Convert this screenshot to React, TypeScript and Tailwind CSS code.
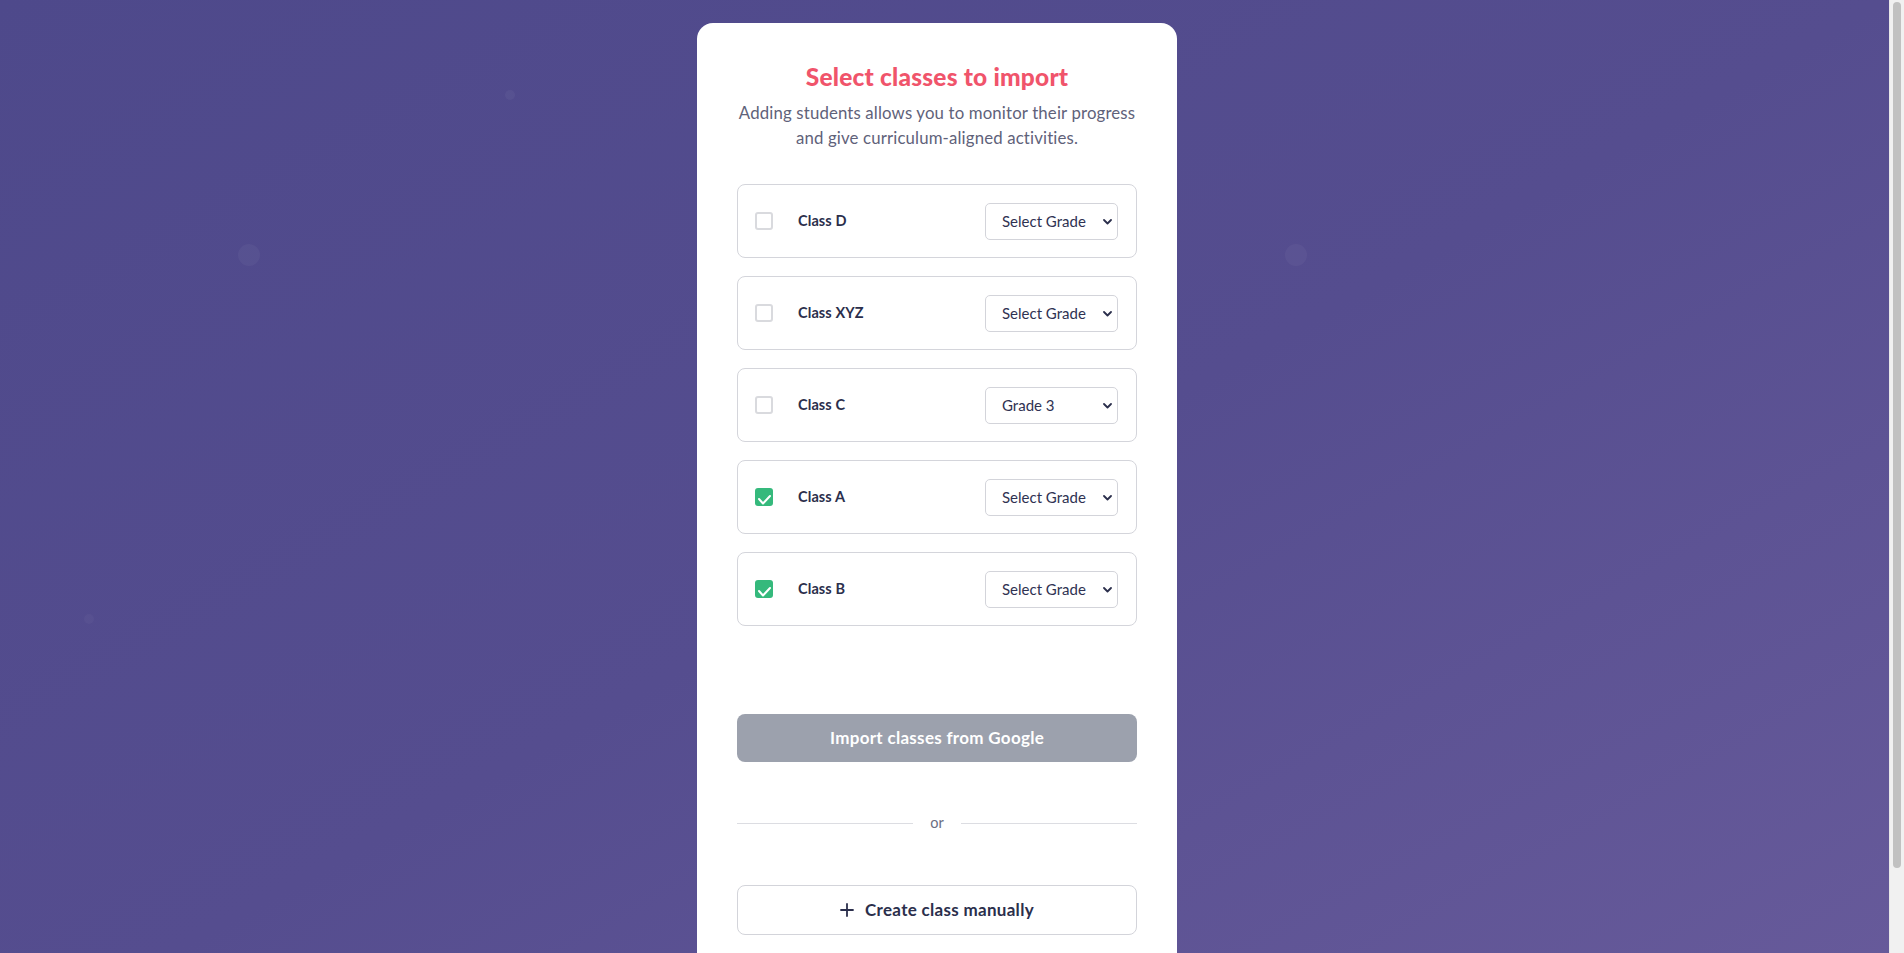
import React, { useState } from "react";

type Row = { name: string; grade: string; checked: boolean };

const initial: Row[] = [
  { name: "Class D", grade: "Select Grade", checked: false },
  { name: "Class XYZ", grade: "Select Grade", checked: false },
  { name: "Class C", grade: "Grade 3", checked: false },
  { name: "Class A", grade: "Select Grade", checked: true },
  { name: "Class B", grade: "Select Grade", checked: true },
];

const grades = ["Select Grade", "Grade 1", "Grade 2", "Grade 3", "Grade 4", "Grade 5"];

function Checkbox({ checked, onClick }: { checked: boolean; onClick: () => void }) {
  return (
    <button
      type="button"
      onClick={onClick}
      className={
        checked
          ? "w-[18px] h-[18px] rounded-[3px] bg-[#35b97c] flex items-end justify-center shrink-0 overflow-hidden"
          : "w-[18px] h-[18px] rounded-[3px] border-2 border-[#d9dade] bg-white shrink-0"
      }
    >
      {checked && (
        <svg width="15" height="13" viewBox="0 0 15 13" fill="none">
          <path d="M2 6 L6 10.5 L13 3" stroke="white" strokeWidth="2" strokeLinecap="round" strokeLinejoin="round" />
        </svg>
      )}
    </button>
  );
}

export default function App() {
  const [rows, setRows] = useState<Row[]>(initial);
  const toggle = (i: number) =>
    setRows((r) => r.map((x, j) => (j === i ? { ...x, checked: !x.checked } : x)));
  const setGrade = (i: number, g: string) =>
    setRows((r) => r.map((x, j) => (j === i ? { ...x, grade: g } : x)));

  return (
    <div className="h-screen w-full overflow-hidden flex">
      <div
        className="relative flex-1 h-[1050px] overflow-hidden bg-gradient-to-br from-[#4e498b] via-[#554d8f] to-[#685b9b] flex justify-center pr-[15px] pt-[23px] pb-[40px]"
        style={{ fontFamily: "Lato, 'Noto Sans', sans-serif" }}
      >
        <div className="absolute left-[238px] top-[244px] w-[22px] h-[22px] rounded-full bg-white/[0.04]" />
        <div className="absolute left-[1285px] top-[244px] w-[22px] h-[22px] rounded-full bg-white/[0.04]" />
        <div className="absolute left-[505px] top-[90px] w-[10px] h-[10px] rounded-full bg-white/[0.04]" />
        <div className="absolute left-[84px] top-[614px] w-[10px] h-[10px] rounded-full bg-white/[0.03]" />

        <div className="relative w-[480px] bg-white rounded-[16px] px-[40px] pt-[40px] pb-[60px] flex flex-col">
          <h1 className="text-center text-[24.5px] leading-[28px] font-black text-[#f0546b] tracking-[0.2px]">
            Select classes to import
          </h1>
          <p className="mt-[9px] text-center text-[16.8px] leading-[25px] text-[#5f627a] tracking-[0.15px]">
            Adding students allows you to monitor their progress and give curriculum-aligned activities.
          </p>

          <div className="mt-[34px] flex flex-col gap-[18px]">
            {rows.map((r, i) => (
              <div
                key={r.name}
                className="h-[74px] border border-[#d4d5db] rounded-[8px] pl-[17px] pr-[18px] flex items-center"
              >
                <Checkbox checked={r.checked} onClick={() => toggle(i)} />
                <span className="ml-[25px] flex-1 text-[14.5px] font-bold text-[#2b2f4c] tracking-[0.1px]">{r.name}</span>
                <div className="relative w-[133px] h-[37px]">
                  <select
                    value={r.grade}
                    onChange={(e) => setGrade(i, e.target.value)}
                    className="appearance-none w-full h-full border border-[#d3d4da] rounded-[5px] bg-white pl-[16px] pr-[24px] text-[15px] text-[#2f3252] outline-none"
                    style={{ fontFamily: "Lato, 'Noto Sans', sans-serif" }}
                  >
                    {grades.map((g) => (
                      <option key={g} value={g}>
                        {g}
                      </option>
                    ))}
                  </select>
                  <svg
                    className="absolute right-[6px] top-[16px] pointer-events-none"
                    width="9"
                    height="6"
                    viewBox="0 0 9 6"
                    fill="none"
                  >
                    <path d="M1 1 L4.5 4.5 L8 1" stroke="#2b2f4c" strokeWidth="1.8" strokeLinecap="round" strokeLinejoin="round" />
                  </svg>
                </div>
              </div>
            ))}
          </div>

          <button
            type="button"
            className="mt-[88px] h-[48px] w-full rounded-[8px] bg-[#9ca1ad] text-white text-[17px] font-bold tracking-[0.3px]"
          >
            Import classes from Google
          </button>

          <div className="mt-[52px] flex items-center">
            <div className="flex-1 h-px bg-[#dcdde2]" />
            <span className="mx-[17px] text-[14.5px] text-[#6b6e82] leading-[18px]">or</span>
            <div className="flex-1 h-px bg-[#dcdde2]" />
          </div>

          <button
            type="button"
            className="mt-[53px] h-[50px] w-full rounded-[8px] border border-[#d3d4da] bg-white flex items-center justify-center gap-[11px] text-[17px] font-bold text-[#2b2f4c] tracking-[0.3px]"
          >
            <svg width="14" height="14" viewBox="0 0 14 14" fill="none">
              <path d="M7 1 V13 M1 7 H13" stroke="#2b2f4c" strokeWidth="1.8" strokeLinecap="round" />
            </svg>
            Create class manually
          </button>
        </div>
      </div>
      <div className="w-[15px] h-full bg-[#f1f1f1] border-l border-[#e8e8e8] px-[3px] pt-[2px] shrink-0">
        <div className="w-full h-[866px] rounded-[4px] bg-[#c1c1c1]" />
      </div>
    </div>
  );
}
